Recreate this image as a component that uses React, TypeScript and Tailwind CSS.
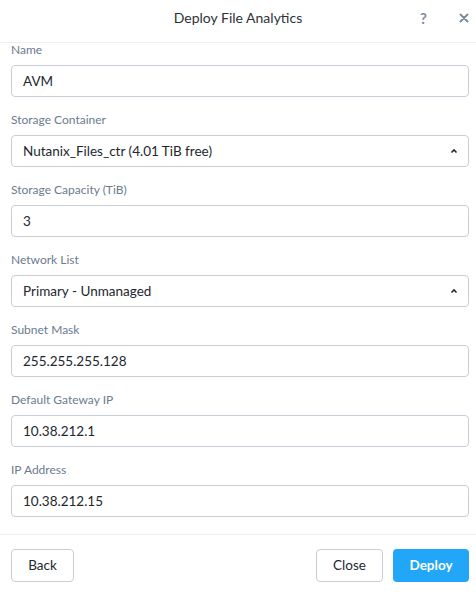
import React from "react";

const fields: { label: string; value: string; select?: boolean }[] = [
  { label: "Name", value: "AVM" },
  { label: "Storage Container", value: "Nutanix_Files_ctr (4.01 TiB free)", select: true },
  { label: "Storage Capacity (TiB)", value: "3" },
  { label: "Network List", value: "Primary - Unmanaged", select: true },
  { label: "Subnet Mask", value: "255.255.255.128" },
  { label: "Default Gateway IP", value: "10.38.212.1" },
  { label: "IP Address", value: "10.38.212.15" },
];

export default function App() {
  return (
    <div
      className="w-[476px] h-[595px] bg-white flex flex-col text-[#22272e]"
      style={{ fontFamily: "Lato, 'Open Sans', sans-serif" }}
    >
      <div className="h-[43px] relative border-b border-[#eceff2] shrink-0">
        <div className="pt-[8px] text-center text-[14px] leading-[20px] text-[#2e3238]">Deploy File Analytics</div>
        <div className="absolute left-[420px] top-[8px] text-[15px] leading-[20px] font-bold text-[#7d8c9e]">?</div>
        <svg className="absolute left-[459px] top-[13px]" width="10" height="10" viewBox="0 0 10 10">
          <path d="M1.5 1.5 L8.5 8.5 M8.5 1.5 L1.5 8.5" stroke="#7d8c9e" strokeWidth="2" strokeLinecap="round" />
        </svg>
      </div>
      <div className="flex flex-col pl-[11px] pr-[7px] gap-[16px]">
        {fields.map((f) => (
          <div key={f.label} className="flex flex-col">
            <div className="text-[12px] text-[#6b7b8e] h-[14px] leading-[14px]">{f.label}</div>
            <div className="mt-[8px] h-[32px] border border-[#c9ced6] rounded-[4px] flex items-center px-[11px] text-[13.5px]">
              <span className="flex-1">{f.value}</span>
              {f.select && (
                <svg width="8" height="6" viewBox="0 0 8 6" className="mr-[-1px]">
                  <path d="M1.5 4.5 L4 2 L6.5 4.5" stroke="#22272e" strokeWidth="1.6" fill="none" />
                </svg>
              )}
            </div>
          </div>
        ))}
      </div>
      <div className="mt-[17px] border-t border-[#eceff2] flex items-center pl-[11px] pr-[7px] pt-[14px]">
        <button className="h-[33px] w-[63px] border border-[#c9ced6] rounded-[4px] text-[13.5px] text-[#22272e]">Back</button>
        <div className="flex-1" />
        <button className="h-[33px] w-[67px] border border-[#c9ced6] rounded-[4px] text-[13.5px] text-[#22272e]">Close</button>
        <button className="ml-[10px] h-[33px] w-[76px] rounded-[4px] bg-[#22a6f7] text-white text-[13.5px] font-bold">Deploy</button>
      </div>
    </div>
  );
}
